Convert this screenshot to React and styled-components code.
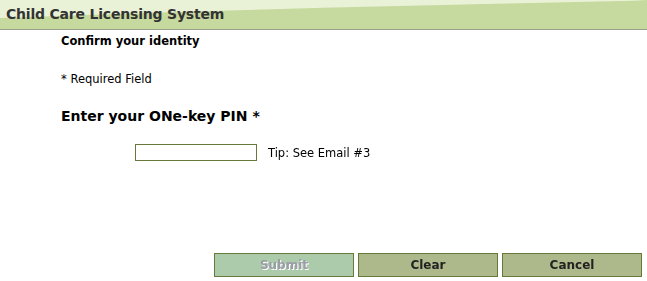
import React from 'react'
import styled, { createGlobalStyle } from 'styled-components'

const GlobalStyle = createGlobalStyle`
  html, body {
    margin: 0;
    padding: 0;
    background: #fff;
    font-family: "DejaVu Sans", Verdana, sans-serif;
    color: #000;
  }
`;

function App() {
  return (
    <Page>
      <GlobalStyle />
      <Header>
        <Title>Child Care Licensing System</Title>
      </Header>

      <Content>
        <Heading>Confirm your identity</Heading>
        <Note>* Required Field</Note>
        <Label>Enter your ONe-key PIN *</Label>
        <PinRow>
          <PinInput type="text" autoFocus />
          <Tip>Tip: See Email #3</Tip>
        </PinRow>
      </Content>

      <Actions>
        <Button disabled $variant="submit">Submit</Button>
        <Button>Clear</Button>
        <Button>Cancel</Button>
      </Actions>
    </Page>
  )
}

export default App;


// --------------------------------
// STYLES
// --------------------------------

const Page = styled.div`
  width: 647px;
  height: 281px;
  display: flex;
  flex-direction: column;
`;

// header band with the pale sweep across the top
const Header = styled.div`
  position: relative;
  height: 29px;
  background: #c6d99e;
  border-bottom: 1px solid #9b9f8c;
  overflow: hidden;

  &::before {
    content: '';
    position: absolute;
    inset: 0;
    background: #e9f2d7;
    clip-path: polygon(0 0, 100% 0, 98% 3%, 75% 14%, 50% 27%, 25% 43%, 0 62%);
  }
`;

const Title = styled.h1`
  position: relative;
  margin: 0;
  padding: 6px 0 0 6px;
  font-size: 14px;
  line-height: 17px;
  letter-spacing: -0.2px;
  font-weight: bold;
  color: #333;
`;

const Content = styled.div`
  padding: 4px 0 0 61px;
  display: flex;
  flex-direction: column;
`;

const Heading = styled.h2`
  margin: 0;
  font-size: 11.5px;
  line-height: 14px;
  font-weight: bold;
`;

const Note = styled.p`
  margin: 24px 0 0;
  font-size: 11.5px;
  line-height: 14px;
`;

const Label = styled.h3`
  margin: 22px 0 0;
  font-size: 14px;
  line-height: 16px;
  font-weight: bold;
`;

const PinRow = styled.div`
  display: flex;
  align-items: center;
  gap: 11px;
  margin: 20px 0 0 74px;
`;

const PinInput = styled.input`
  box-sizing: border-box;
  width: 122px;
  height: 17px;
  margin: 0;
  padding: 0 2px;
  border: 1px solid #66783a;
  outline: none;
  font-size: 11px;
`;

const Tip = styled.span`
  font-size: 11.5px;
  line-height: 14px;
`;

const Actions = styled.div`
  margin-top: auto;
  display: flex;
  justify-content: flex-end;
  gap: 4px;
  padding: 0 5px 4px 0;
`;

const Button = styled.button`
  box-sizing: border-box;
  width: 140px;
  height: 24px;
  margin: 0;
  padding: 0;
  border: 1px solid #66783a;
  background: ${p => (p.$variant === 'submit' ? '#abcbaa' : '#adb98b')};
  color: #222;
  font-family: "DejaVu Sans", Verdana, sans-serif;
  font-size: 12px;
  font-weight: bold;
  cursor: pointer;

  &:disabled {
    color: #9c9ca8;
    text-shadow: 1px 1px 0 #fff;
    cursor: default;
  }
`;
